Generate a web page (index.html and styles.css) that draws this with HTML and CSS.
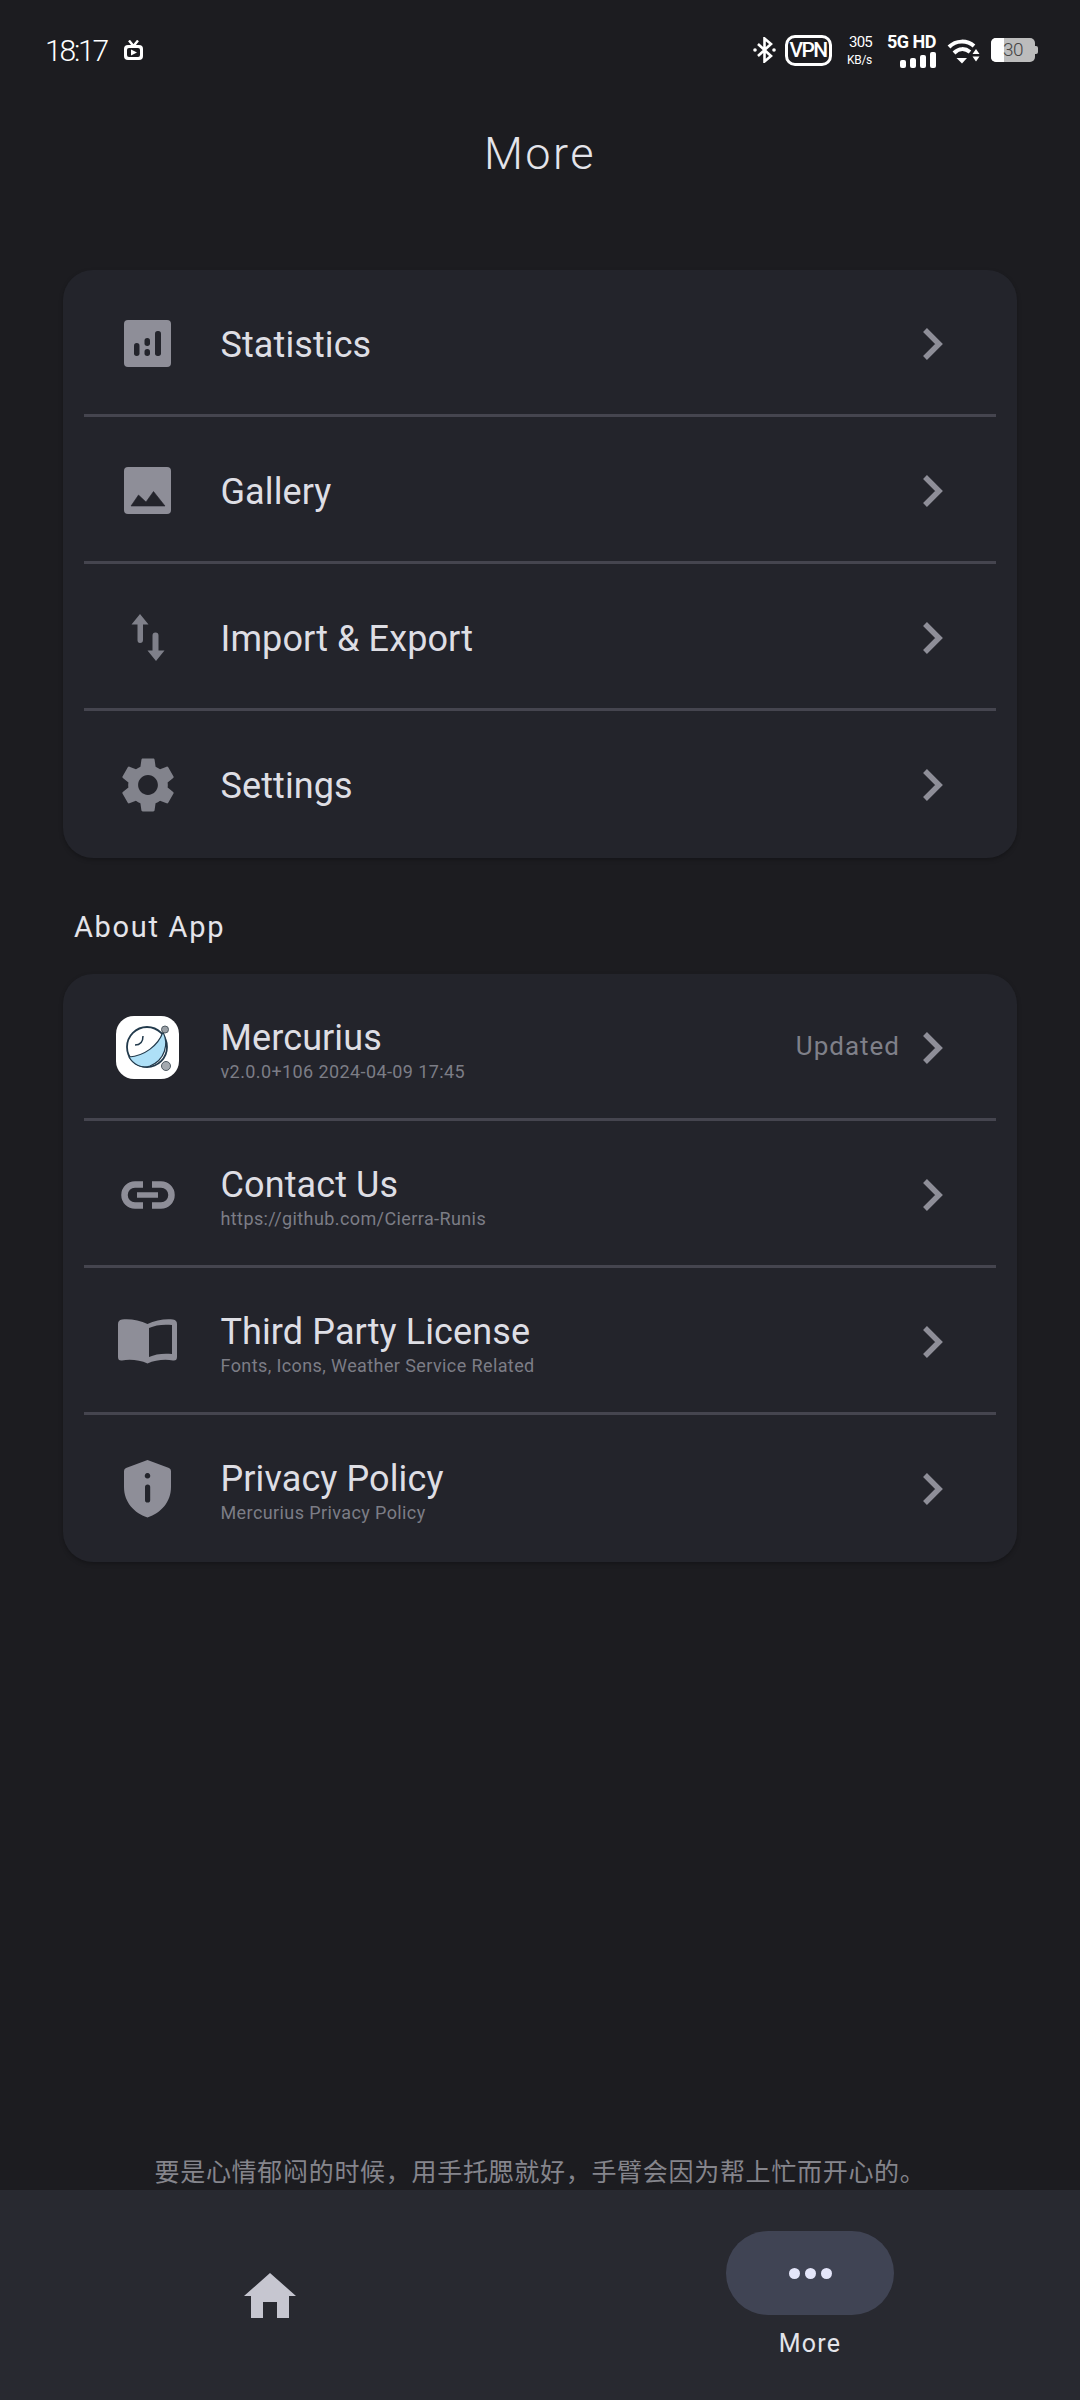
FILE: index.html
```html
<!DOCTYPE html>
<html lang="en">
<head>
	<meta charset="UTF-8">
	<title>More</title>
	<link rel="stylesheet" href="styles.css">
</head>
<body>
	<div class="page">
		<div class="status">
			<div class="status-left">
				<span class="time">18:17</span>
				<svg class="tv" viewBox="0 0 19 20"><path d="M5 0.5 L9.5 6 L14 0.5" fill="none" stroke="#fff" stroke-width="2.4"/><rect x="0" y="5" width="19" height="15" rx="4" fill="#fff"/><rect x="3" y="8" width="13" height="9" rx="2" fill="#1c1c20"/><path d="M7 9.5 L13 12.5 L7 15.5Z" fill="#fff"/></svg>
			</div>
			<div class="status-right">
				<svg class="bt" viewBox="0 0 24 26"><path d="M5 7 L18 19 L11.5 24.5 V1.5 L18 7 L5 19" fill="none" stroke="#fff" stroke-width="2.6"/><circle cx="2" cy="13" r="1.8" fill="#fff"/><circle cx="21" cy="13" r="1.8" fill="#fff"/></svg>
				<span class="vpn">VPN</span>
				<div class="speed"><span class="speed-num">305</span><span class="speed-unit">KB/s</span></div>
				<div class="net">
					<span class="net-text">5G HD</span>
					<div class="bars"><i class="bar1"></i><i class="bar2"></i><i class="bar3"></i><i class="bar4"></i></div>
				</div>
				<svg class="wifi" viewBox="0 0 33 27"><path d="M2 10 C9 3 20 3 27 9" fill="none" stroke="#fff" stroke-width="4"/><path d="M7 16 C12 11 18 11 23 15" fill="none" stroke="#fff" stroke-width="4"/><path d="M9.5 21 H20 L15 26.5Z" fill="#fff"/><path d="M29 12 L32.5 17 H25.5Z M25.5 19.5 H32.5 L29 24.5Z" fill="#fff"/></svg>
				<div class="battery"><div class="battery-fill"></div><span class="battery-num">30</span></div>
			</div>
		</div>

		<h1 class="title">More</h1>

		<div class="main">
			<div class="card">
				<div class="row">
					<div class="icon">
						<svg width="47" height="47" viewBox="0 0 47 47"><rect width="47" height="47" rx="4" fill="#8e8e98"/><rect x="10" y="23" width="5.5" height="13" rx="2.7" fill="#23242b"/><rect x="20.5" y="18" width="5.5" height="8" rx="2.7" fill="#23242b"/><rect x="20.5" y="29" width="5.5" height="7" rx="2.7" fill="#23242b"/><rect x="31" y="11" width="6" height="25" rx="2.7" fill="#23242b"/></svg>
					</div>
					<span class="name">Statistics</span>
					<svg class="chev" viewBox="0 0 24 36"><path d="M4 4 L18 18 L4 32" /></svg>
				</div>
				<div class="row">
					<div class="icon">
						<svg width="47" height="47" viewBox="0 0 47 47"><rect width="47" height="47" rx="4" fill="#8e8e98"/><path d="M7 39 L14.5 28 L22 35 L29.5 24.5 L41 39Z" fill="#23242b" stroke="#23242b" stroke-width="0.6"/></svg>
					</div>
					<span class="name">Gallery</span>
					<svg class="chev" viewBox="0 0 24 36"><path d="M4 4 L18 18 L4 32" /></svg>
				</div>
				<div class="row">
					<div class="icon">
						<svg width="36" height="48" viewBox="0 0 36 48"><path d="M10 0 L18.5 10.5 H13 V26 Q13 29 10 29 Q7.500 29 7.500 26 V10.500 H1.500Z" fill="#7f808a"/><path d="M26 47 L17.500 36.500 H22.500 V21.500 Q22.500 18.500 25.500 18.500 Q28.500 18.500 28.500 21.500 V36.500 H34.500Z" fill="#7f808a"/></svg>
					</div>
					<span class="name">Import &amp; Export</span>
					<svg class="chev" viewBox="0 0 24 36"><path d="M4 4 L18 18 L4 32" /></svg>
				</div>
				<div class="row">
					<div class="icon">
						<svg width="66" height="66" viewBox="0 0 24 24"><path fill="#82838c" d="M19.14 12.94c.04-.3.06-.61.06-.94 0-.32-.02-.64-.07-.94l2.03-1.58c.18-.14.23-.41.12-.61l-1.92-3.32c-.12-.22-.37-.29-.59-.22l-2.39.96c-.5-.38-1.03-.7-1.62-.94l-.36-2.54c-.04-.24-.24-.41-.48-.41h-3.84c-.24 0-.43.17-.47.41l-.36 2.54c-.59.24-1.13.57-1.62.94l-2.39-.96c-.22-.08-.47 0-.59.22L2.74 8.87c-.12.21-.08.47.12.61l2.03 1.58c-.05.3-.09.63-.09.94s.02.64.07.94l-2.03 1.58c-.18.14-.23.41-.12.61l1.92 3.32c.12.22.37.29.59.22l2.39-.96c.5.38 1.03.7 1.62.94l.36 2.54c.05.24.24.41.48.41h3.84c.24 0 .44-.17.47-.41l.36-2.54c.59-.24 1.13-.56 1.62-.94l2.39.96c.22.08.47 0 .59-.22l1.92-3.32c.12-.22.07-.47-.12-.61l-2.01-1.58zM12 15.6c-1.98 0-3.6-1.62-3.6-3.6s1.62-3.6 3.6-3.6 3.6 1.62 3.6 3.6-1.62 3.6-3.6 3.6z"/></svg>
					</div>
					<span class="name">Settings</span>
					<svg class="chev" viewBox="0 0 24 36"><path d="M4 4 L18 18 L4 32" /></svg>
				</div>
			</div>

			<div class="label">About App</div>

			<div class="card">
				<div class="row">
					<div class="icon">
						<svg class="logo" width="63" height="63" viewBox="0 0 63 63">
							<rect width="63" height="63" rx="18" fill="#fff"/>
							<circle cx="31" cy="31" r="20" fill="#fff" stroke="#223a4c" stroke-width="1.8"/>
							<path d="M13 41 C28 40 42 30 47 16 C53 28 49 44 34 50 C25 53 17 48 13 41Z" fill="#aee0f7" stroke="#223a4c" stroke-width="1.2"/>
							<path d="M19 29 C24 29 27 26 27 20" fill="none" stroke="#223a4c" stroke-width="1.5"/>
							<circle cx="49" cy="13.500" r="3.500" fill="#9aa0a6" stroke="#4e5a62"/>
							<circle cx="50" cy="50" r="4.500" fill="#a4aab0" stroke="#4e5a62"/>
						</svg>
					</div>
					<div class="text">
						<span class="name">Mercurius</span>
						<span class="sub">v2.0.0+106 2024-04-09 17:45</span>
					</div>
					<span class="note">Updated</span>
					<svg class="chev chev-note" viewBox="0 0 24 36"><path d="M4 4 L18 18 L4 32" /></svg>
				</div>
				<div class="row">
					<div class="icon">
						<svg width="54" height="28" viewBox="0 0 54 28"><path d="M22 3.500 H14 a10.500 10.500 0 0 0 0 21 H22 M31 3.500 H40 a10.500 10.500 0 0 1 0 21 H31" fill="none" stroke="#8e8e98" stroke-width="6.500"/><path d="M16 14 H37" stroke="#8e8e98" stroke-width="5.500"/></svg>
					</div>
					<div class="text">
						<span class="name">Contact Us</span>
						<span class="sub">https://github.com/Cierra-Runis</span>
					</div>
					<svg class="chev" viewBox="0 0 24 36"><path d="M4 4 L18 18 L4 32" /></svg>
				</div>
				<div class="row">
					<div class="icon">
						<svg width="59" height="45" viewBox="0 0 59 45"><path fill="#8e8e98" fill-rule="evenodd" d="M29.500 5 C22 1 11 -0.500 4 0.500 Q0 1 0 5 V38 Q0 42 4 41.500 C12 40 22 41 29.500 44.500 C37 41 47 40 55 41.500 Q59 42 59 38 V5 Q59 1 55 0.500 C48 -0.500 37 1 29.500 5Z M31 9 V38 C37 35 46 34 54 35 V6 C46 5 37 6 31 9Z"/></svg>
					</div>
					<div class="text">
						<span class="name">Third Party License</span>
						<span class="sub">Fonts, Icons, Weather Service Related</span>
					</div>
					<svg class="chev" viewBox="0 0 24 36"><path d="M4 4 L18 18 L4 32" /></svg>
				</div>
				<div class="row">
					<div class="icon">
						<svg width="47" height="58" viewBox="0 0 47 58"><path fill="#8e8e98" fill-rule="evenodd" d="M23.500 0 L45 8 Q47 9 47 11 V27 C47 42 37 53 23.500 57.500 C10 53 0 42 0 27 V11 Q0 9 2 8Z M23.500 13 a2.800 2.800 0 1 0 0.010 0Z M21 27 V40 a2.600 2.600 0 0 0 5.200 0 V27 a2.600 2.600 0 0 0 -5.200 0Z"/></svg>
					</div>
					<div class="text">
						<span class="name">Privacy Policy</span>
						<span class="sub">Mercurius Privacy Policy</span>
					</div>
					<svg class="chev" viewBox="0 0 24 36"><path d="M4 4 L18 18 L4 32" /></svg>
				</div>
			</div>
		</div>

		<div class="quote">要是心情郁闷的时候&#65292;用手托腮就好&#65292;手臂会因为帮上忙而开心的&#12290;</div>

		<div class="nav">
			<div class="nav-item">
				<svg width="52" height="45" viewBox="0 0 52 45"><path fill="#c6c6d0" fill-rule="evenodd" d="M26 0 L52 23 H45 V45 H33 V29 H19 V45 H7 V23 H0Z"/></svg>
			</div>
			<div class="nav-item">
				<div class="pill"><i></i><i></i><i></i></div>
				<span class="nav-label">More</span>
			</div>
		</div>
	</div>
</body>
</html>
```

FILE: styles.css
```css
body {
	margin: 0;
	background: #1c1c20;
	font-family: Roboto, "Noto Sans CJK SC", sans-serif;
}
.page {
	display: flex;
	flex-direction: column;
	height: 2400px;
}

/* status bar */
.status {
	display: flex;
	justify-content: space-between;
	align-items: center;
	height: 100px;
	padding: 0 45px;
	color: #fff;
}
.status-left {
	display: flex;
	align-items: center;
	gap: 17px;
}
.time {
	font-size: 30px;
	font-weight: 300;
	letter-spacing: -2.2px;
}
.tv {
	width: 19px;
	height: 20px;
}
.status-right {
	display: flex;
	align-items: center;
}
.bt {
	width: 24px;
	height: 26px;
	margin-right: 7.5px;
}
.vpn {
	box-sizing: border-box;
	width: 47px;
	height: 31px;
	border: 3px solid #fff;
	border-radius: 10px;
	font-size: 21px;
	font-weight: 500;
	line-height: 25px;
	letter-spacing: -1.600px;
	text-align: center;
}
.speed {
	display: flex;
	flex-direction: column;
	align-items: flex-end;
	width: 40.5px;
	margin-right: 15px;
}
.speed-num {
	font-size: 15px;
	line-height: 20px;
	letter-spacing: -0.8px;
}
.speed-unit {
	font-size: 12px;
	line-height: 16px;
	letter-spacing: -0.3px;
}
.net {
	display: flex;
	flex-direction: column;
	align-items: flex-end;
	width: 49px;
	margin-right: 11px;
}
.net-text {
	font-size: 18px;
	font-weight: 700;
	line-height: 18px;
	letter-spacing: -0.5px;
	white-space: nowrap;
}
.bars {
	display: flex;
	align-items: flex-end;
	gap: 4px;
	height: 17px;
}
.bars i {
	width: 6px;
	border-radius: 2px;
	background: #fff;
}
.bar1 { height: 8px; }
.bar2 { height: 10px; }
.bar3 { height: 13px; }
.bar4 { height: 16px; }
.wifi {
	width: 33px;
	height: 27px;
	margin-right: 11px;
}
.battery {
	position: relative;
	width: 44px;
	height: 24px;
	border-radius: 5px;
	background: #bcbcbc;
}
.battery::after {
	content: "";
	position: absolute;
	right: -3px;
	top: 8px;
	width: 3px;
	height: 8px;
	border-radius: 0 2px 2px 0;
	background: #bcbcbc;
}
.battery-fill {
	width: 13px;
	height: 24px;
	border-radius: 5px 0 0 5px;
	background: #fff;
}
.battery-num {
	position: absolute;
	left: 12px;
	top: 0;
	font-size: 19px;
	font-weight: 300;
	line-height: 24px;
	letter-spacing: -0.6px;
	color: #444;
}

.title {
	margin: 0;
	height: 108px;
	font-size: 45px;
	font-weight: 300;
	line-height: 108px;
	letter-spacing: 2.5px;
	text-align: center;
	color: #e4e4ea;
}

.main {
	margin-top: 62px;
	padding: 0 63px;
}
.card {
	border-radius: 30px;
	background: #23242b;
	box-shadow: 0 2px 4px rgba(0, 0, 0, 0.25);
}
.row {
	position: relative;
	display: flex;
	align-items: center;
	height: 147px;
	padding: 0 72px 0 53px;
}
.row::after {
	content: "";
	position: absolute;
	left: 21px;
	right: 21px;
	bottom: 0;
	height: 3px;
	background: #45454f;
}
.row:last-child::after {
	display: none;
}
.icon {
	display: flex;
	flex: none;
	justify-content: center;
	align-items: center;
	width: 63px;
	height: 63px;
	margin-right: 41.5px;
}
.icon svg {
	flex: none;
}
.text {
	display: flex;
	flex-direction: column;
}
.name {
	padding-top: 3px;
	font-size: 36px;
	line-height: 44px;
	letter-spacing: 0.1px;
	color: #dedee4;
}
.text .name {
	padding-top: 4px;
}
.sub {
	font-size: 18px;
	line-height: 24px;
	letter-spacing: 0.4px;
	color: #7c7d86;
}
.note {
	margin-left: auto;
	margin-bottom: 3px;
	font-size: 26px;
	letter-spacing: 1px;
	color: #7f8089;
}
.chev {
	width: 24px;
	height: 36px;
	margin-left: auto;
	fill: none;
	stroke: #8e8e98;
	stroke-width: 5.5;
}
.chev-note {
	margin-left: 21px;
}
.label {
	padding: 46px 0 24px 11px;
	font-size: 29px;
	line-height: 46px;
	letter-spacing: 1.7px;
	color: #e4e4ea;
}

.quote {
	margin-top: auto;
	font-size: 25px;
	line-height: 34px;
	letter-spacing: 0.7px;
	text-align: center;
	color: #85858c;
}

.nav {
	display: grid;
	grid-template-columns: 1fr 1fr;
	height: 210px;
	background: #282930;
}
.nav-item {
	display: flex;
	flex-direction: column;
	justify-content: center;
	align-items: center;
	gap: 14px;
}
.pill {
	display: flex;
	justify-content: center;
	align-items: center;
	gap: 5px;
	width: 168px;
	height: 84px;
	border-radius: 42px;
	background: #404454;
}
.pill i {
	width: 11px;
	height: 11px;
	border-radius: 50%;
	background: #e4e6fa;
}
.nav-label {
	font-size: 25px;
	line-height: 30px;
	letter-spacing: 1.2px;
	color: #e4e4ea;
}
```
